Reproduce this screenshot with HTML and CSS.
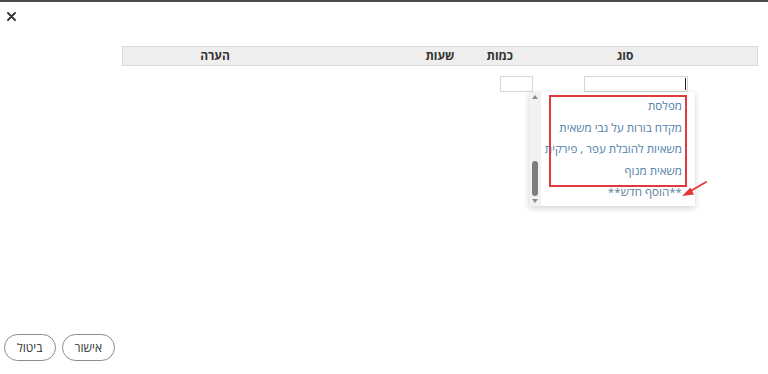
FILE: index.html
```html
<!DOCTYPE html>
<html lang="he">
<head>
    <meta charset="UTF-8">
    <title>הוספת ציוד</title>
    <link rel="stylesheet" href="styles.css">
</head>
<body>
    <div class="modal">
        <button class="close" aria-label="סגור">
            <svg width="9" height="9" viewBox="0 0 9 9"><path d="M1 1L8 8M8 1L1 8" stroke="#333" stroke-width="1.8" stroke-linecap="round"/></svg>
        </button>

        <div class="table">
            <div class="thead">
                <div class="th th-type">סוג</div>
                <div class="th th-qty">כמות</div>
                <div class="th th-hours">שעות</div>
                <div class="th th-note">הערה</div>
            </div>

            <div class="trow">
                <div class="field field-type">
                    <span class="caret"></span>

                    <!-- autocomplete list -->
                    <div class="dropdown">
                        <div class="scrollbar">
                            <span class="arrow-up"></span>
                            <span class="thumb"></span>
                            <span class="arrow-down"></span>
                        </div>
                        <ul class="options">
                            <li>מפלסת</li>
                            <li>מקדח בורות על גבי משאית</li>
                            <li>משאיות להובלת עפר , פירקית</li>
                            <li>משאית מנוף</li>
                            <li class="add-new">**הוסף חדש**</li>
                        </ul>
                        <div class="highlight"></div>
                        <svg class="pointer" width="28" height="18" viewBox="0 0 28 18">
                            <path d="M26 2L9 12" stroke="#e0393e" stroke-width="2" stroke-linecap="round"/>
                            <path d="M2 16L10.5 7.5L14 14.5Z" fill="#e0393e"/>
                        </svg>
                    </div>
                </div>
                <div class="field field-qty"></div>
            </div>
        </div>

        <div class="footer">
            <button class="btn">אישור</button>
            <button class="btn">ביטול</button>
        </div>
    </div>
</body>
</html>
```

FILE: styles.css
```css
:root {
    --text-color: #333;
    --border-color: #dcdcdc;
    --head-bg: #eeeeee;
    --option-color: #4f7fa9;
    --mark-color: #e0393e;
}

* {
    box-sizing: border-box;
}

body {
    margin: 0;
    background: #fff;
    font-family: "Open Sans", "Liberation Sans", "DejaVu Sans", sans-serif;
    color: var(--text-color);
}

.modal {
    height: 374px;
    border-top: 2px solid #4a4a4a;
    display: flex;
    flex-direction: column;
}

.close {
    align-self: flex-start;
    margin: 9px 0 0 6px;
    padding: 0;
    border: none;
    background: none;
    width: 11px;
    height: 11px;
    display: flex;
    align-items: center;
    justify-content: center;
}

/* Table */
.table {
    margin: 24px 10px 0 122px;
    direction: rtl;
}

.thead {
    display: flex;
    height: 20px;
    background: var(--head-bg);
    border: 1px solid var(--border-color);
    font-size: 12px;
    font-weight: bold;
    line-height: 18px;
}

.th {
    text-align: center;
    white-space: nowrap;
}

.th-type {
    width: 244px;
    padding-right: 20px;
}

.th-qty {
    width: 26px;
}

.th-hours {
    width: 94px;
}

.th-note {
    flex: 1;
    padding-right: 86px;
}

.trow {
    display: flex;
    gap: 51px;
    padding-right: 70px;
    margin-top: 10px;
}

.field {
    height: 16px;
    border: 1px solid #d6d6d6;
    background: #fff;
}

.field-type {
    width: 104px;
    position: relative;
    display: flex;
    align-items: center;
}

.field-qty {
    width: 33px;
}

.caret {
    width: 1px;
    height: 12px;
    margin-right: 1px;
    background: #222;
}

/* Autocomplete */
.dropdown {
    position: absolute;
    top: 15px;
    right: -8px;
    width: 166px;
    height: 114px;
    background: #fff;
    box-shadow: 0 2px 6px rgba(0, 0, 0, 0.18);
    display: flex;
}

.options {
    list-style: none;
    margin: 0;
    padding: 3px 13px 0 0;
    flex: 1;
    font-size: 11.6px;
    line-height: 21.6px;
    color: var(--option-color);
    white-space: nowrap;
}

.options .add-new {
    color: #5d7f9c;
}

.scrollbar {
    order: 2;
    width: 12px;
    background: #f1f1f1;
    display: flex;
    flex-direction: column;
    align-items: center;
    justify-content: space-between;
    padding: 3px 0;
}

.arrow-up,
.arrow-down {
    width: 0;
    height: 0;
    border-left: 3.5px solid transparent;
    border-right: 3.5px solid transparent;
}

.arrow-up {
    border-bottom: 4px solid #8a8a8a;
}

.arrow-down {
    border-top: 4px solid #8a8a8a;
}

.thumb {
    width: 6px;
    height: 35px;
    margin-top: auto;
    margin-bottom: 3px;
    border-radius: 3px;
    background: #7d7d7d;
}

.highlight {
    position: absolute;
    top: 3px;
    right: 8px;
    width: 138px;
    height: 92px;
    border: 2px solid var(--mark-color);
}

.pointer {
    position: absolute;
    top: 88px;
    right: -13px;
}

/* Footer */
.footer {
    margin-top: auto;
    margin-bottom: 13px;
    padding-left: 4px;
    display: flex;
    flex-direction: row-reverse;
    justify-content: flex-end;
    gap: 6px;
}

.btn {
    height: 27px;
    padding: 0 12px;
    border: 1px solid #8c8c8c;
    border-radius: 14px;
    background: #fff;
    font-family: inherit;
    font-size: 12px;
    color: var(--text-color);
}
```
